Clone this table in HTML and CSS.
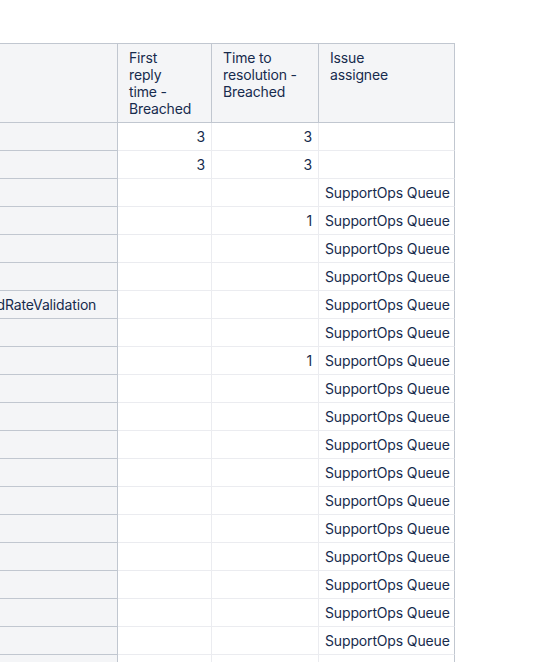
FILE: index.html
```html
<!DOCTYPE html>
<html>
<head>
<meta charset="utf-8">
<link rel="stylesheet" href="styles.css">
</head>
<body>
<div class="viewport">
<table class="report">
  <colgroup>
    <col class="c-name">
    <col class="c-first">
    <col class="c-res">
    <col class="c-assignee">
  </colgroup>
  <thead>
    <tr>
      <th class="name"></th>
      <th>First<br>reply<br>time -<br>Breached</th>
      <th>Time to<br>resolution -<br>Breached</th>
      <th class="last">Issue<br>assignee</th>
    </tr>
  </thead>
  <tbody>
    <tr><td class="name"></td><td class="num">3</td><td class="num">3</td><td class="last"></td></tr>
    <tr><td class="name"></td><td class="num">3</td><td class="num">3</td><td class="last"></td></tr>
    <tr><td class="name"></td><td class="num"></td><td class="num"></td><td class="last">SupportOps Queue</td></tr>
    <tr><td class="name"></td><td class="num"></td><td class="num">1</td><td class="last">SupportOps Queue</td></tr>
    <tr><td class="name"></td><td class="num"></td><td class="num"></td><td class="last">SupportOps Queue</td></tr>
    <tr><td class="name"></td><td class="num"></td><td class="num"></td><td class="last">SupportOps Queue</td></tr>
    <tr><td class="name">ClaimReviewedRateValidation</td><td class="num"></td><td class="num"></td><td class="last">SupportOps Queue</td></tr>
    <tr><td class="name"></td><td class="num"></td><td class="num"></td><td class="last">SupportOps Queue</td></tr>
    <tr><td class="name"></td><td class="num"></td><td class="num">1</td><td class="last">SupportOps Queue</td></tr>
    <tr><td class="name"></td><td class="num"></td><td class="num"></td><td class="last">SupportOps Queue</td></tr>
    <tr><td class="name"></td><td class="num"></td><td class="num"></td><td class="last">SupportOps Queue</td></tr>
    <tr><td class="name"></td><td class="num"></td><td class="num"></td><td class="last">SupportOps Queue</td></tr>
    <tr><td class="name"></td><td class="num"></td><td class="num"></td><td class="last">SupportOps Queue</td></tr>
    <tr><td class="name"></td><td class="num"></td><td class="num"></td><td class="last">SupportOps Queue</td></tr>
    <tr><td class="name"></td><td class="num"></td><td class="num"></td><td class="last">SupportOps Queue</td></tr>
    <tr><td class="name"></td><td class="num"></td><td class="num"></td><td class="last">SupportOps Queue</td></tr>
    <tr><td class="name"></td><td class="num"></td><td class="num"></td><td class="last">SupportOps Queue</td></tr>
    <tr><td class="name"></td><td class="num"></td><td class="num"></td><td class="last">SupportOps Queue</td></tr>
    <tr><td class="name"></td><td class="num"></td><td class="num"></td><td class="last">SupportOps Queue</td></tr>
    <tr><td class="name"></td><td class="num"></td><td class="num"></td><td class="last">SupportOps Queue</td></tr>
  </tbody>
</table>
</div>
</body>
</html>
```

FILE: styles.css
```css
html, body {
  margin: 0;
  padding: 0;
  background: #ffffff;
}
body {
  font-family: Inter, "Noto Sans", "Liberation Sans", sans-serif;
  font-size: 14px;
  letter-spacing: -0.15px;
  color: #172b4d;
  overflow: hidden;
  height: 662px;
}
.viewport {
  padding-top: 43px;
}
.report {
  border-collapse: separate;
  border-spacing: 0;
  table-layout: fixed;
  width: 555px;
  margin-left: -100px;
}
.c-name { width: 218px; }
.c-first { width: 94px; }
.c-res { width: 107px; }
.c-assignee { width: 136px; }

.report th {
  background: #f4f5f7;
  font-weight: 400;
  text-align: left;
  vertical-align: top;
  line-height: 17px;
  padding: 5px 8px 5px 11px;
  height: 68px;
  white-space: nowrap;
  border-top: 1px solid #c1c7d0;
  border-right: 1px solid #c1c7d0;
  border-bottom: 1px solid #c1c7d0;
  box-sizing: content-box;
}
.report td {
  height: 28px;
  padding: 0 6px;
  line-height: 17px;
  vertical-align: middle;
  white-space: nowrap;
  overflow: hidden;
  border-right: 1px solid #ebecf0;
  border-bottom: 1px solid #ebecf0;
  box-sizing: border-box;
}
.report td.name {
  background: #f4f5f7;
  border-right-color: #c1c7d0;
  border-bottom-color: #c1c7d0;
}
.report td.num {
  text-align: right;
}
.report td.last,
.report th.last {
  border-right-color: #c1c7d0;
}
```
